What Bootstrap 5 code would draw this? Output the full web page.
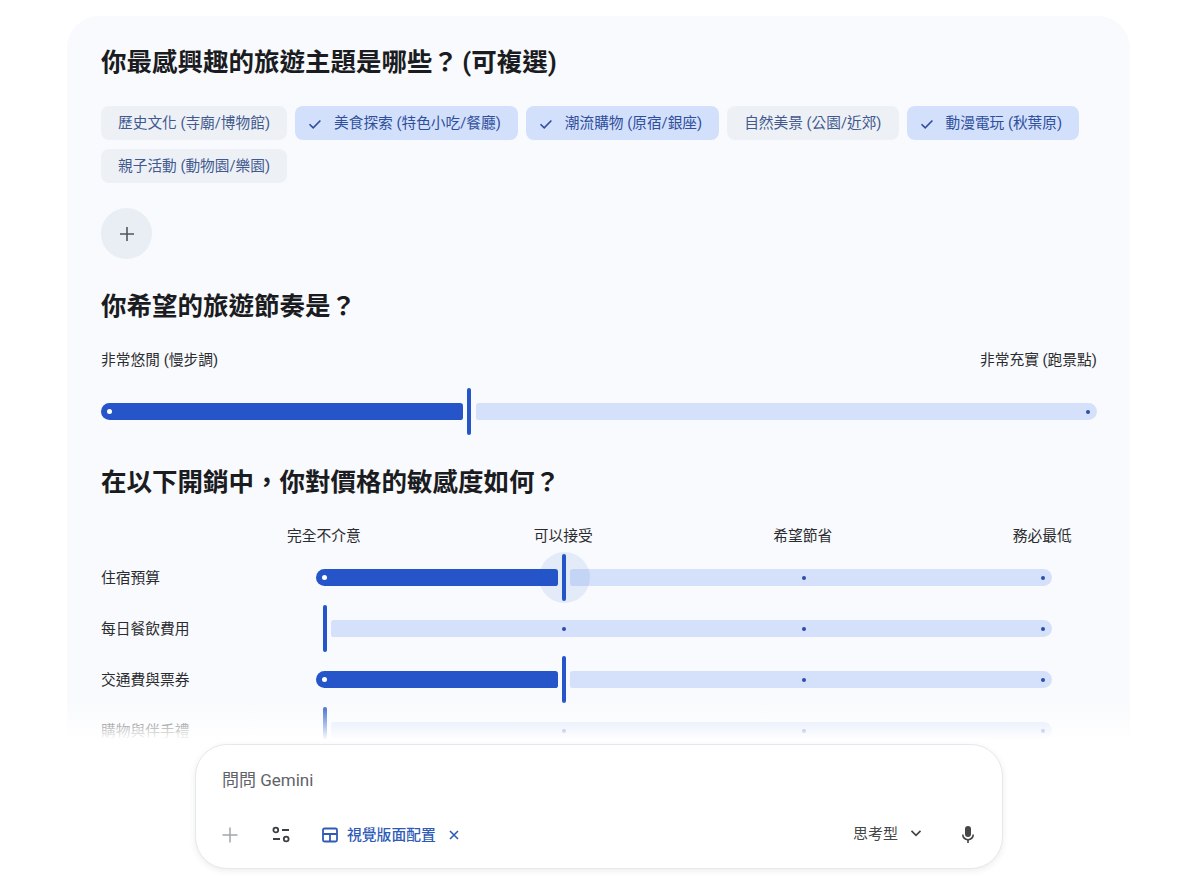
<!DOCTYPE html>
<html lang="zh-Hant">
<head>
    <meta charset="UTF-8" />
    <title>旅遊偏好</title>
    <link rel="stylesheet" href="https://cdn.jsdelivr.net/npm/bootstrap@5.3.0/dist/css/bootstrap.min.css" />
    <style>
        html, body { height: 880px; overflow: hidden; background: #fff; }
        body { font-family: "Roboto", "Noto Sans CJK TC", sans-serif; color: #1f1f1f; }
        .page-wrap { position: relative; height: 880px; overflow: hidden; padding: 16px 70px 0 67px; }
        .panel { background: #f8fafd; border-radius: 32px; padding: 30px 33px 0 34px; height: 900px; }
        .q-title { font-size: 25.5px; line-height: 32px; font-weight: 700; margin: 0; color: #1b1c1f; word-spacing: -2px; }
        .q-title.next { margin-top: 31px; }
        .chip-wrap { margin-top: 28px; gap: 9px 8px; }
        .chip { height: 34px; padding: 1px 17px 0; border: 0; border-radius: 8px; background: #edf1f6; color: #42598f; font-size: 14.7px; display: inline-flex; align-items: center; }
        .chip.on { background: #d3e0fb; color: #2f4f9c; padding: 1px 17px 0 13px; }
        .chip svg { margin-right: 12px; }
        .add-btn { width: 51px; height: 51px; margin-top: 25px; border: 0; border-radius: 50%; background: #e9eef4; padding: 0; }
        .end-labels { margin-top: 28px; font-size: 14.75px; line-height: 20px; color: #2b2c2f; }
        .slider { position: relative; display: flex; align-items: center; height: 47px; }
        .slider.main { margin-top: 18px; }
        .slider.main .thumb { margin-right: 5px; }
        .fill { height: 17px; background: #2555c8; border-radius: 9px 3px 3px 9px; flex: none; }
        .rest { height: 17px; background: #d5e1fa; border-radius: 3px 9px 9px 3px; flex: 1; }
        .thumb { width: 4px; height: 47px; background: #2555c8; border-radius: 2px; margin: 0 4px; flex: none; position: relative; z-index: 2; }
        .thumb.start { margin-left: 7px; }
        .halo { position: absolute; width: 51px; height: 51px; left: -23.5px; top: -2px; border-radius: 50%; background: rgba(37, 85, 200, .09); }
        .tick { position: absolute; top: 50%; width: 4px; height: 4px; margin: -2px 0 0 -2px; border-radius: 50%; background: #2a4fa8; z-index: 1; }
        .tick.white { background: #fff; width: 5px; height: 5px; margin: -2.5px 0 0 -2.5px; }
        .stop-labels { margin-top: 28px; padding-left: 103px; font-size: 14.75px; line-height: 20px; color: #2b2c2f; }
        .stop-labels span { flex: 0 0 239.5px; text-align: center; }
        .rows { margin-top: 8px; gap: 4px; }
        .row-name { flex: 0 0 215px; font-size: 14.75px; color: #2b2c2f; padding-top: 1px; }
        .row-track { flex: 0 0 736px; }
        .bottom-bar { position: absolute; left: 0; right: 0; bottom: 0; height: 180px; padding-top: 44px; z-index: 5; background: linear-gradient(to bottom, rgba(255,255,255,0) 0, #fff 40px); }
        .composer { width: 808px; height: 125px; margin-left: 195px; padding: 24px 24px 0 25px; background: #fff; border: 1px solid #e6e8eb; border-radius: 32px; box-shadow: 0 2px 6px rgba(40, 50, 70, .09); }
        .ask { font-size: 17px; line-height: 22px; color: #5f6368; padding-left: 1px; }
        .tools { margin-top: 32px; height: 24px; }
        .tune-icon { margin: 0 30px 0 32px; }
        .tool-label { font-size: 14.8px; color: #2f5bb7; font-weight: 500; margin: 0 12px 0 8px; }
        .mode { font-size: 15px; line-height: 20px; color: #444746; margin-bottom: 2px; }
        .chev { margin: 0 36px 4px 12px; }
    </style>
</head>
<body>

<div class="page-wrap">
    <div class="panel">
        <h2 class="q-title">你最感興趣的旅遊主題是哪些？ (可複選)</h2>
        <div class="chip-wrap d-flex flex-wrap">
            <span class="chip">歷史文化 (寺廟/博物館)</span>
            <span class="chip on"><svg width="14" height="14" viewBox="0 0 14 14" fill="none" stroke="#2f4f9c" stroke-width="1.6"><path d="M1.5 7.2l3.7 3.7 7.2-7.4"/></svg>美食探索 (特色小吃/餐廳)</span>
            <span class="chip on"><svg width="14" height="14" viewBox="0 0 14 14" fill="none" stroke="#2f4f9c" stroke-width="1.6"><path d="M1.5 7.2l3.7 3.7 7.2-7.4"/></svg>潮流購物 (原宿/銀座)</span>
            <span class="chip">自然美景 (公園/近郊)</span>
            <span class="chip on"><svg width="14" height="14" viewBox="0 0 14 14" fill="none" stroke="#2f4f9c" stroke-width="1.6"><path d="M1.5 7.2l3.7 3.7 7.2-7.4"/></svg>動漫電玩 (秋葉原)</span>
            <span class="chip">親子活動 (動物園/樂園)</span>
        </div>
        <button class="add-btn d-flex align-items-center justify-content-center">
            <svg width="16" height="16" viewBox="0 0 16 16" fill="none" stroke="#50565f" stroke-width="1.6"><path d="M8 1v14M1 8h14"/></svg>
        </button>

        <h2 class="q-title next">你希望的旅遊節奏是？</h2>
        <div class="end-labels d-flex justify-content-between">
            <span>非常悠閒 (慢步調)</span>
            <span>非常充實 (跑景點)</span>
        </div>
        <div class="slider main">
            <span class="tick white" style="left: 8px"></span>
            <span class="tick" style="left: 987px"></span>
            <div class="fill" style="width: 362px"></div>
            <div class="thumb"></div>
            <div class="rest"></div>
        </div>

        <h2 class="q-title next">在以下開銷中，你對價格的敏感度如何？</h2>
        <div class="stop-labels d-flex">
            <span>完全不介意</span>
            <span>可以接受</span>
            <span>希望節省</span>
            <span>務必最低</span>
        </div>
        <div class="rows d-flex flex-column">
            <div class="d-flex align-items-center">
                <div class="row-name">住宿預算</div>
                <div class="row-track slider">
                    <span class="tick white" style="left: 8px"></span>
                    <span class="tick" style="left: 487.5px"></span>
                    <span class="tick" style="left: 727px"></span>
                    <div class="fill" style="width: 242px"></div>
                    <div class="thumb"><span class="halo"></span></div>
                    <div class="rest"></div>
                </div>
            </div>
            <div class="d-flex align-items-center">
                <div class="row-name">每日餐飲費用</div>
                <div class="row-track slider">
                    <span class="tick" style="left: 248px"></span>
                    <span class="tick" style="left: 487.5px"></span>
                    <span class="tick" style="left: 727px"></span>
                    <div class="thumb start"></div>
                    <div class="rest"></div>
                </div>
            </div>
            <div class="d-flex align-items-center">
                <div class="row-name">交通費與票券</div>
                <div class="row-track slider">
                    <span class="tick white" style="left: 8px"></span>
                    <span class="tick" style="left: 487.5px"></span>
                    <span class="tick" style="left: 727px"></span>
                    <div class="fill" style="width: 242px"></div>
                    <div class="thumb"></div>
                    <div class="rest"></div>
                </div>
            </div>
            <div class="d-flex align-items-center">
                <div class="row-name">購物與伴手禮</div>
                <div class="row-track slider">
                    <span class="tick" style="left: 248px"></span>
                    <span class="tick" style="left: 487.5px"></span>
                    <span class="tick" style="left: 727px"></span>
                    <div class="thumb start"></div>
                    <div class="rest"></div>
                </div>
            </div>
        </div>
    </div>

    <div class="bottom-bar">
        <div class="composer">
            <div class="ask">問問 Gemini</div>
            <div class="tools d-flex align-items-center">
                <svg width="18" height="18" viewBox="0 0 18 18" fill="none" stroke="#a3a6aa" stroke-width="1.5"><path d="M9 1.5v15M1.5 9h15"/></svg>
                <svg class="tune-icon" width="20" height="20" viewBox="0 0 20 20" fill="none" stroke="#3c4043" stroke-width="1.8"><circle cx="4.8" cy="5" r="2.4"/><path d="M11 5h7M2 14h7"/><circle cx="15.2" cy="14" r="2.4"/></svg>
                <svg width="18" height="18" viewBox="0 0 18 18" fill="none" stroke="#2f5bb7" stroke-width="1.8"><rect x="2" y="2.5" width="14" height="13" rx="1.5"/><path d="M2 8h14M9 8v7.5"/></svg>
                <span class="tool-label">視覺版面配置</span>
                <svg width="12" height="12" viewBox="0 0 12 12" fill="none" stroke="#2f5bb7" stroke-width="1.6"><path d="M2 2l8 8M10 2l-8 8"/></svg>
                <span class="mode ms-auto">思考型</span>
                <svg class="chev" width="12" height="12" viewBox="0 0 12 12" fill="none" stroke="#444746" stroke-width="1.7"><path d="M1.5 3.8L6 8.3l4.5-4.5"/></svg>
                <svg width="20" height="22" viewBox="0 0 20 22" fill="#444746"><rect x="7" y="2" width="6" height="11" rx="3"/><path d="M4 10.5h1.6a4.4 4.4 0 0 0 8.800 0H16a6 6 0 0 1-5.200 5.900V19H9.200v-2.600A6 6 0 0 1 4 10.500z"/></svg>
            </div>
        </div>
    </div>
</div>

<script src="https://cdn.jsdelivr.net/npm/bootstrap@5.3.0/dist/js/bootstrap.bundle.min.js"></script>
</body>
</html>
